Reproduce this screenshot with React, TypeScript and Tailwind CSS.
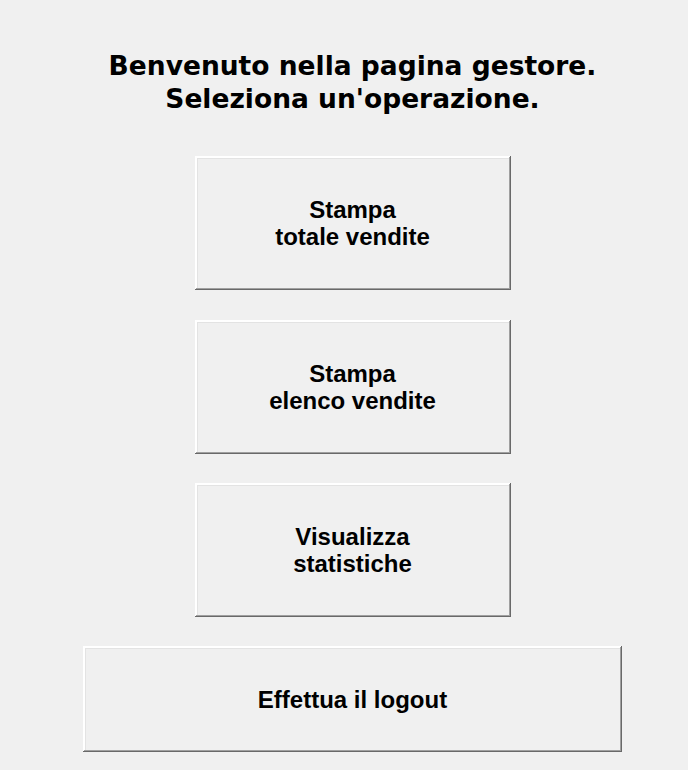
import React from "react";

const btnShadow =
  "shadow-[inset_-1px_-1px_0_#696969,inset_1px_1px_0_#ffffff,inset_-2px_-2px_0_#a0a0a0,inset_2px_2px_0_#ffffff,inset_3px_3px_0_#e3e3e3]";

function Btn({ lines, w, h, className = "" }: { lines: string[]; w: string; h: string; className?: string }) {
  return (
    <button
      className={`${w} ${h} ${btnShadow} ${className} bg-[#f0f0f0] flex flex-col items-center justify-center text-[24px] leading-[27px] font-bold text-black`}
      style={{ fontFamily: '"Liberation Sans", Arial, sans-serif' }}
    >
      {lines.map((l, i) => (
        <span key={i}>{l}</span>
      ))}
    </button>
  );
}

export default function App() {
  return (
    <div
      className="w-[688px] h-[770px] bg-[#f0f0f0] overflow-hidden flex flex-col items-center pl-[17px]"
      style={{ fontFamily: '"Liberation Sans", Arial, sans-serif' }}
    >
      <div
        className="mt-[49px] text-center text-[26.5px] leading-[33px] font-bold text-black"
        style={{ fontFamily: '"DejaVu Sans", Verdana, sans-serif' }}
      >
        <div>Benvenuto nella pagina gestore.</div>
        <div>Seleziona un'operazione.</div>
      </div>
      <Btn lines={["Stampa", "totale vendite"]} w="w-[316px]" h="h-[134px]" className="mt-[41px]" />
      <Btn lines={["Stampa", "elenco vendite"]} w="w-[316px]" h="h-[134px]" className="mt-[30px]" />
      <Btn lines={["Visualizza", "statistiche"]} w="w-[316px]" h="h-[134px]" className="mt-[29px]" />
      <Btn lines={["Effettua il logout"]} w="w-[539px]" h="h-[106px]" className="mt-[29px]" />
    </div>
  );
}
